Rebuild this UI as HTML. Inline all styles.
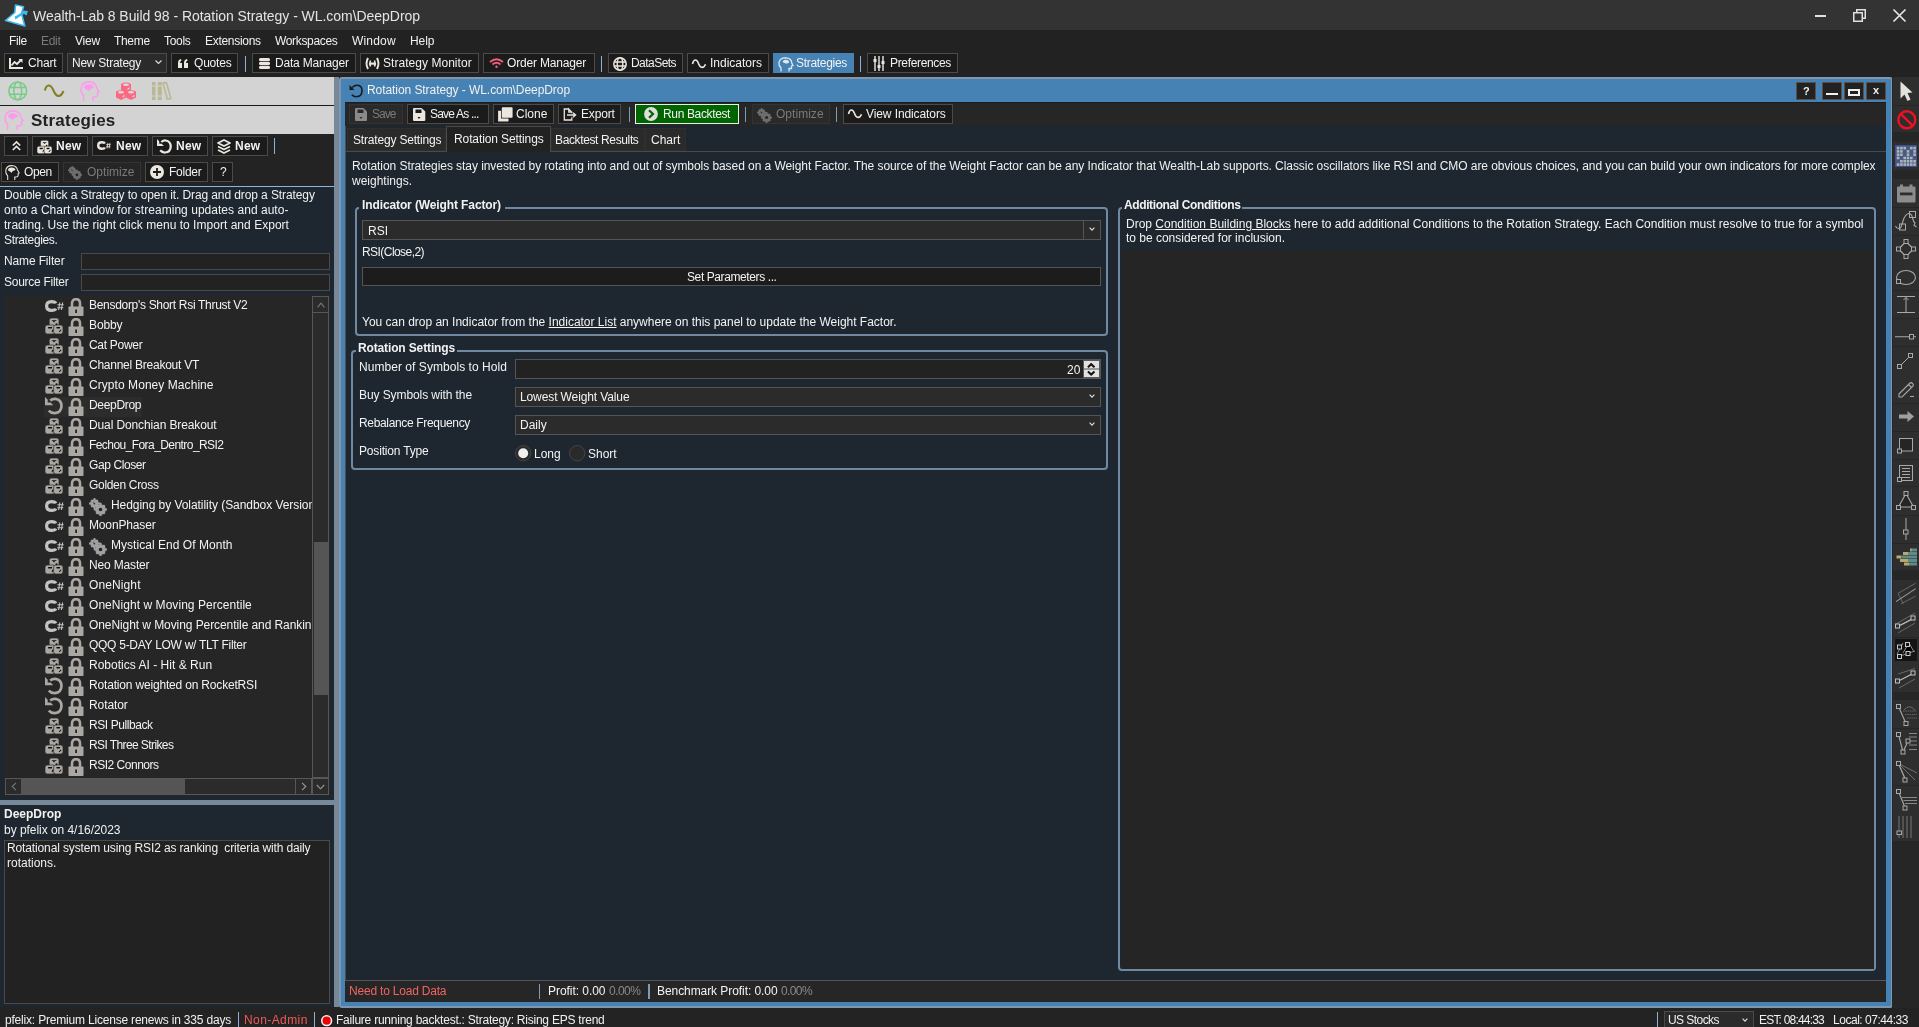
<!DOCTYPE html>
<html><head><meta charset="utf-8">
<style>
*{box-sizing:border-box;margin:0;padding:0}
html,body{width:1919px;height:1027px;overflow:hidden;background:#232323;font-family:"Liberation Sans",sans-serif;font-size:12px;color:#f2f2f2}
.a{position:absolute}
.t{position:absolute;white-space:nowrap;line-height:1;will-change:transform}
svg{position:absolute;overflow:visible}
</style></head><body>
<div class="a" style="left:0px;top:0px;width:1919px;height:30px;background:#333333;"></div>
<svg style="left:0px;top:0px;" width="32" height="30" viewBox="0 0 32 30"><path d="M15.5 5 L23.5 6.8 L21.5 13.5 L24.8 26 L5.5 20.5 L14.8 12.5 Z" fill="#fff" stroke="#3db8ec" stroke-width="1.6" stroke-linejoin="round"/>
    <path d="M14.5 16.5 L15.5 19.5 L22 15 L24 14 L26.5 15.5 L28 11 L23.5 10.5 L22.5 12 L16 16 Z" fill="#3db8ec"/>
    <path d="M17 6 L22 7 L20 12 L16 15 Z" fill="#fff"/></svg>
<div class="t" style="left:33px;top:9.35px;font-size:14px;color:#e4e4e4;letter-spacing:-0.044px;">Wealth-Lab 8 Build 98 - Rotation Strategy - WL.com\DeepDrop</div>
<div class="a" style="left:1815px;top:15px;width:11px;height:1.5px;background:#e0e0e0;"></div>
<svg style="left:1853px;top:8px;" width="14" height="14" viewBox="0 0 14 14"><path d="M0.75 4.75 H9.25 V13.25 H0.75 Z M3.75 4.5 V1.75 H12.25 V10.25 H9.5" fill="none" stroke="#e0e0e0" stroke-width="1.5"/></svg>
<svg style="left:1893px;top:9px;" width="13" height="13" viewBox="0 0 13 13"><path d="M0.5 0.5 L12.5 12.5 M12.5 0.5 L0.5 12.5" stroke="#e8e8e8" stroke-width="1.6"/></svg>
<div class="a" style="left:0px;top:30px;width:1919px;height:47px;background:#222222;"></div>
<div class="t" style="left:9.25px;top:34.64px;letter-spacing:-0.398px;">File</div>
<div class="t" style="left:41.25px;top:34.64px;color:#7a7a7a;letter-spacing:-0.297px;">Edit</div>
<div class="t" style="left:75px;top:34.64px;letter-spacing:-0.199px;">View</div>
<div class="t" style="left:114.25px;top:34.64px;letter-spacing:-0.322px;">Theme</div>
<div class="t" style="left:164.25px;top:34.64px;letter-spacing:-0.303px;">Tools</div>
<div class="t" style="left:205px;top:34.64px;letter-spacing:-0.295px;">Extensions</div>
<div class="t" style="left:275px;top:34.64px;letter-spacing:-0.331px;">Workspaces</div>
<div class="t" style="left:352px;top:34.64px;letter-spacing:0.177px;">Window</div>
<div class="t" style="left:410px;top:34.64px;letter-spacing:-0.047px;">Help</div>
<div class="a" style="left:4px;top:53px;width:59px;height:20px;background:#1b1b1b;border:1px solid #4b4b4b;"></div>
<svg style="left:9px;top:58px;" width="14" height="11" viewBox="0 0 14 11"><path d="M1 0 V10 H14" fill="none" stroke="#ebe6de" stroke-width="2"/><path d="M2.5 7.5 L5.5 4 L8 6 L12 2" fill="none" stroke="#ebe6de" stroke-width="1.8"/><path d="M9.5 1 H13.5 V5 Z" fill="#ebe6de"/></svg>
<div class="t" style="left:27.7px;top:56.84px;letter-spacing:-0.209px;">Chart</div>
<div class="a" style="left:67px;top:53px;width:100px;height:20px;background:#2b2b2b;border:1px solid #4b4b4b;"></div>
<div class="t" style="left:71.7px;top:56.84px;letter-spacing:-0.253px;">New Strategy</div>
<svg style="left:155px;top:60px;" width="7" height="4" viewBox="0 0 7 4"><path d="M0.5 0.5 L3.5 3.5 L6.5 0.5" fill="none" stroke="#d8d8d8" stroke-width="1.2"/></svg>
<div class="a" style="left:171px;top:53px;width:67px;height:20px;background:#1b1b1b;border:1px solid #4b4b4b;"></div>
<svg style="left:178px;top:59px;" width="10" height="9" viewBox="0 0 10 9"><path d="M0 4 Q0 0.5 3 0 L3.5 1.5 Q2 2 2 4 H4 V9 H0 Z M6 4 Q6 0.5 9 0 L9.5 1.5 Q8 2 8 4 H10 V9 H6 Z" fill="#ebe6de"/></svg>
<div class="t" style="left:193.5px;top:56.84px;letter-spacing:-0.201px;">Quotes</div>
<div class="a" style="left:245px;top:56px;width:1px;height:16px;background:#8fb0d8;"></div>
<div class="a" style="left:252px;top:53px;width:104px;height:20px;background:#1b1b1b;border:1px solid #4b4b4b;"></div>
<svg style="left:258.5px;top:58px;" width="11" height="11" viewBox="0 0 11 11"><rect x="0" y="0" width="11" height="3.2" rx="1.5" fill="#ebe6de"/><rect x="0" y="4" width="11" height="3" rx="1.2" fill="#ebe6de"/><rect x="0" y="7.8" width="11" height="3.2" rx="1.5" fill="#ebe6de"/></svg>
<div class="t" style="left:275px;top:56.84px;letter-spacing:-0.191px;">Data Manager</div>
<div class="a" style="left:360px;top:53px;width:119px;height:20px;background:#1b1b1b;border:1px solid #4b4b4b;"></div>
<svg style="left:365px;top:57px;" width="15" height="13" viewBox="0 0 15 13"><path d="M3 1 Q0 6.5 3 12 M12 1 Q15 6.5 12 12" fill="none" stroke="#ebe6de" stroke-width="2"/><path d="M5.5 3.5 Q4 6.5 5.5 9.5 M9.5 3.5 Q11 6.5 9.5 9.5" fill="none" stroke="#ebe6de" stroke-width="1.6"/><rect x="5" y="5.5" width="5" height="2.2" fill="#ebe6de"/></svg>
<div class="t" style="left:383.3px;top:56.84px;letter-spacing:0.041px;">Strategy Monitor</div>
<div class="a" style="left:483px;top:53px;width:112px;height:20px;background:#1b1b1b;border:1px solid #4b4b4b;"></div>
<svg style="left:489px;top:58px;" width="15" height="10" viewBox="0 0 15 10"><path d="M1 4 Q7.5 -1.5 14 4" fill="none" stroke="#ee5f7e" stroke-width="1.8"/><path d="M3.5 6.5 Q7.5 3 11.5 6.5" fill="none" stroke="#ee5f7e" stroke-width="1.8"/><rect x="6.5" y="7.5" width="2" height="2.5" fill="#ee5f7e"/></svg>
<div class="t" style="left:507.4px;top:56.84px;letter-spacing:-0.183px;">Order Manager</div>
<div class="a" style="left:601px;top:56px;width:1px;height:16px;background:#8fb0d8;"></div>
<div class="a" style="left:608px;top:53px;width:75px;height:20px;background:#1b1b1b;border:1px solid #4b4b4b;"></div>
<svg style="left:613px;top:56.5px;" width="14" height="14" viewBox="0 0 14 14"><circle cx="7" cy="7" r="6.2" fill="none" stroke="#ebe6de" stroke-width="1.5"/><ellipse cx="7" cy="7" rx="2.8" ry="6.2" fill="none" stroke="#ebe6de" stroke-width="1.4"/><path d="M1 5 H13 M1 9 H13" stroke="#ebe6de" stroke-width="1.3"/></svg>
<div class="t" style="left:631.2px;top:56.84px;letter-spacing:-0.545px;">DataSets</div>
<div class="a" style="left:687px;top:53px;width:82px;height:20px;background:#1b1b1b;border:1px solid #4b4b4b;"></div>
<svg style="left:692px;top:58.5px;" width="14" height="10" viewBox="0 0 14 10"><path d="M0.5 5 C1.8 -0.2 4.8 -0.2 6.5 4.5 C8 8.8 11.5 10.2 13.5 5.2" fill="none" stroke="#ebe6de" stroke-width="1.6"/></svg>
<div class="t" style="left:710px;top:56.84px;letter-spacing:-0.003px;">Indicators</div>
<div class="a" style="left:773px;top:53px;width:81px;height:20px;background:#4682b4;"></div>
<svg style="left:777.5px;top:56.5px;" width="15" height="15" viewBox="0 0 15 15"><path d="M3 14.5 V11 Q0.5 8.5 1 5.5 Q1.8 0.8 7.5 0.8 Q13.5 1 13.8 6 L15 8.5 L13.5 9 V11.5 L11 11.5 V14.5" fill="none" stroke="#dde8f2" stroke-width="1.3"/><path d="M4.5 5 Q5 2.5 8 2.7 Q11.5 3 11 5.8 Q9 7 7 6.2 Z" fill="#dde8f2"/></svg>
<div class="t" style="left:796px;top:56.84px;letter-spacing:-0.303px;">Strategies</div>
<div class="a" style="left:860px;top:56px;width:1px;height:16px;background:#8fb0d8;"></div>
<div class="a" style="left:867px;top:53px;width:91px;height:20px;background:#1b1b1b;border:1px solid #4b4b4b;"></div>
<svg style="left:873px;top:55.5px;" width="12" height="15" viewBox="0 0 12 15"><path d="M2 0 V15 M6 0 V15 M10 0 V15" stroke="#ebe6de" stroke-width="1.4"/><rect x="0.5" y="3" width="3" height="3" fill="#ebe6de"/><rect x="4.5" y="9" width="3" height="3" fill="#ebe6de"/><rect x="8.5" y="5" width="3" height="3" fill="#ebe6de"/></svg>
<div class="t" style="left:890px;top:56.84px;letter-spacing:-0.337px;">Preferences</div>
<svg width="0" height="0" style="position:absolute">
<defs>
<symbol id="csharp" viewBox="0 0 19 12"><path d="M10.8 3.4 Q10 1.6 6.5 1.6 Q1.6 1.6 1.6 6 Q1.6 10.4 6.5 10.4 Q10 10.4 10.8 8.6" fill="none" stroke="currentColor" stroke-width="3.2"/><path d="M14.8 2.5 L13.6 10 M17.6 2.5 L16.4 10 M12.4 4.8 H18.6 M12.2 7.7 H18.3" stroke="currentColor" stroke-width="1.1" fill="none"/></symbol>
<symbol id="cubes" viewBox="0 0 18 16"><g stroke="#252525" stroke-width="0.7"><rect x="4.2" y="0" width="9.8" height="9" rx="2.2" fill="currentColor"/><rect x="0" y="7" width="10.2" height="9" rx="2.2" fill="currentColor"/><rect x="8.6" y="7" width="9.4" height="9" rx="2.2" fill="currentColor"/></g><g fill="#111"><path d="M6.3 2.2 H12 L9.8 3.6 L9 4.5 L8.2 3.6 Z"/><circle cx="11.5" cy="6.2" r="1"/><path d="M3 9 H7.2 L6.8 10.6 H3.3 Z"/><path d="M11.3 9 H15.2 L14.8 10.6 H11.7 Z"/><path d="M7.3 11.5 L8.3 12 L7.4 14.5 L6.6 14 Z"/><path d="M15.8 11.4 L16.5 12.2 L14.5 14.3 L13.8 13.6 Z"/></g></symbol>
<symbol id="lock" viewBox="0 0 16 18"><path d="M4 9 V5.5 Q4 1.2 8 1.2 Q12 1.2 12 5.5 V9" fill="none" stroke="currentColor" stroke-width="2.6"/><rect x="0.5" y="8.5" width="15" height="9.5" rx="0.8" fill="currentColor"/><rect x="7.2" y="11.5" width="1.8" height="3.5" fill="#252525"/></symbol>
<symbol id="rotate" viewBox="0 0 18 18"><path d="M5.2 3.6 Q7.5 1.6 10.5 1.8 Q16.3 2.6 16.5 9 Q16.3 15.6 9.8 16.2 Q6.2 16.3 3.8 13.6" fill="none" stroke="currentColor" stroke-width="2.7"/><path d="M0 0 V8.3 H8.3 L5.6 5.6 L2.7 5.6 L2.7 2.7 Z" fill="currentColor"/></symbol>
<symbol id="gears" viewBox="0 0 18 18"><g fill="currentColor"><circle cx="5.5" cy="5.5" r="4.2"/><path d="M4.6 0 H6.4 V11 H4.6 Z M0 4.6 H11 V6.4 H0 Z M1.5 2.8 L2.8 1.5 L9.5 8.2 L8.2 9.5 Z M8.2 1.5 L9.5 2.8 L2.8 9.5 L1.5 8.2 Z"/><circle cx="11.5" cy="11.5" r="5.3"/><path d="M10.4 4.8 H12.6 V18.2 H10.4 Z M4.8 10.4 H18.2 V12.6 H4.8 Z M6.5 8.1 L8.1 6.5 L16.5 14.9 L14.9 16.5 Z M14.9 6.5 L16.5 8.1 L8.1 16.5 L6.5 14.9 Z"/></g><circle cx="11.5" cy="11.5" r="1.8" fill="#252525"/><path d="M4 3.5 L6.5 6 L5 6.5 Z" fill="#252525"/></symbol>
<symbol id="head" viewBox="0 0 20 20"><path d="M3.6 20 V14.5 Q0.8 12 1 8 Q1.5 0.8 9 0.8 Q15.5 1 16.8 7 L19 10.8 L17.5 11.5 V14.5 Q17 16 14.5 16 H13 V20" fill="none" stroke="currentColor" stroke-width="1.4"/><path d="M4 6.5 Q4.5 3 9 3.2 Q13.5 3.5 14 6.8 Q12.5 7.8 10.5 8 L8.3 10.5 L7 8.5 Q4.5 8 4 6.5 Z" fill="currentColor"/></symbol>
</defs></svg>
<div class="a" style="left:0px;top:77px;width:334px;height:28px;background:#d3d3d3;"></div>
<svg style="left:8px;top:81px;" width="20" height="20" viewBox="0 0 20 20"><circle cx="9.75" cy="9.9" r="8.9" fill="none" stroke="#77cc88" stroke-width="1.6"/><ellipse cx="9.75" cy="9.9" rx="3.9" ry="8.9" fill="none" stroke="#77cc88" stroke-width="1.5"/><path d="M1.3 6.6 H18.2 M1.3 13.2 H18.2" stroke="#77cc88" stroke-width="1.5"/></svg>
<svg style="left:44px;top:84px;" width="20" height="14" viewBox="0 0 20 14"><path d="M0.8 6.5 C2.5 0 6.5 -0.5 9.5 6.5 C12.5 13.5 16.5 14 19.5 7" fill="none" stroke="#808020" stroke-width="2"/></svg>
<svg style="left:80px;top:81px;color:#ff99ee" width="20" height="20"><use href="#head"/></svg>
<svg style="left:116px;top:82px;" width="20" height="18" viewBox="0 0 20 18"><g fill="#ff6680"><path d="M5 2 Q10 -0.8 15 2 V8 L10 10.5 L5 8 Z"/><path d="M0 9.5 Q5 6.8 10 9.5 V15.5 L5 18 L0 15.5 Z"/><path d="M10 9.5 Q15 6.8 20 9.5 V15.5 L15 18 L10 15.5 Z"/></g><g fill="#cfe0e0"><ellipse cx="10" cy="2.8" rx="3" ry="1.2"/><ellipse cx="5" cy="10.2" rx="3" ry="1.2"/><ellipse cx="15" cy="10.2" rx="3" ry="1.2"/><path d="M11.5 6.5 L13.5 5.2 L13.5 7 L11.5 8 Z M6.5 14 L8.5 12.8 L8.5 14.6 L6.5 15.6 Z M16.5 14 L18.5 12.8 L18.5 14.6 L16.5 15.6 Z"/></g></svg>
<svg style="left:152px;top:82px;" width="20" height="18" viewBox="0 0 20 18"><g fill="#b8b896"><rect x="0" y="0" width="3.5" height="18"/><rect x="5.8" y="0" width="4" height="18"/></g><path d="M11 1 L14.5 0.6 L18.8 16.5 L15.3 17.2 Z" fill="none" stroke="#b8b896" stroke-width="1.6"/><path d="M0 4 H10 M0 14 H10" stroke="#d3d3d3" stroke-width="1"/></svg>
<div class="a" style="left:0px;top:104.5px;width:334px;height:1.7px;background:#1a1a1a;"></div>
<div class="a" style="left:0px;top:106.2px;width:334px;height:27.8px;background:#d3d3d3;"></div>
<svg style="left:4px;top:110px;color:#ff99ee" width="20" height="20"><use href="#head"/></svg>
<div class="t" style="left:30.8px;top:112.21px;font-size:17px;color:#222;font-weight:700;letter-spacing:0.230px;">Strategies</div>
<div class="a" style="left:0px;top:134px;width:334px;height:52px;background:#232323;"></div>
<div class="a" style="left:4px;top:136px;width:24px;height:20px;background:#1b1b1b;border:1px solid #4b4b4b;"></div>
<svg style="left:11.5px;top:141px;" width="9" height="10" viewBox="0 0 9 10"><path d="M0.8 4.5 L4.5 0.9 L8.2 4.5 M0.8 9 L4.5 5.4 L8.2 9" fill="none" stroke="#ebe6de" stroke-width="1.7"/></svg>
<div class="a" style="left:32px;top:136px;width:56px;height:20px;background:#1b1b1b;border:1px solid #4b4b4b;"></div>
<svg style="left:36.5px;top:139.5px;color:#ebe6de" width="15" height="14"><use href="#cubes"/></svg>
<div class="t" style="left:55.5px;top:139.84px;color:#f2f2f2;font-weight:700;letter-spacing:0.237px;">New</div>
<div class="a" style="left:92px;top:136px;width:56px;height:20px;background:#1b1b1b;border:1px solid #4b4b4b;"></div>
<svg style="left:97px;top:140px;color:#ebe6de" width="14" height="11"><use href="#csharp"/></svg>
<div class="t" style="left:115.6px;top:139.84px;color:#f2f2f2;font-weight:700;letter-spacing:0.237px;">New</div>
<div class="a" style="left:152px;top:136px;width:56px;height:20px;background:#1b1b1b;border:1px solid #4b4b4b;"></div>
<svg style="left:156.5px;top:139px;color:#ebe6de" width="15" height="15"><use href="#rotate"/></svg>
<div class="t" style="left:175.6px;top:139.84px;color:#f2f2f2;font-weight:700;letter-spacing:0.237px;">New</div>
<div class="a" style="left:212px;top:136px;width:56px;height:20px;background:#1b1b1b;border:1px solid #4b4b4b;"></div>
<svg style="left:217px;top:139px;" width="14" height="15" viewBox="0 0 14 15"><path d="M7 1 L13 4 L7 7 L1 4 Z" fill="none" stroke="#ebe6de" stroke-width="1.8" stroke-linejoin="round"/><path d="M1 7.5 L7 10.5 L13 7.5 M1 11 L7 14 L13 11" fill="none" stroke="#ebe6de" stroke-width="1.8" stroke-linejoin="round"/></svg>
<div class="t" style="left:235.4px;top:139.84px;color:#f2f2f2;font-weight:700;letter-spacing:0.237px;">New</div>
<div class="a" style="left:274px;top:138px;width:1px;height:16px;background:#8fb0d8;"></div>
<div class="a" style="left:1px;top:162px;width:58px;height:20px;background:#1b1b1b;border:1px solid #4b4b4b;"></div>
<svg style="left:4.7px;top:165px;color:#ebe6de" width="15" height="15"><use href="#head"/></svg>
<div class="t" style="left:23.5px;top:165.84px;letter-spacing:-0.415px;">Open</div>
<div class="a" style="left:63px;top:162px;width:78px;height:20px;background:#262626;border:1px solid #333333;"></div>
<svg style="left:68px;top:165.5px;color:#6e6e6e" width="14" height="14"><use href="#gears"/></svg>
<div class="t" style="left:86.6px;top:165.84px;color:#7a7a7a;letter-spacing:0.020px;">Optimize</div>
<div class="a" style="left:145px;top:162px;width:63px;height:20px;background:#1b1b1b;border:1px solid #4b4b4b;"></div>
<svg style="left:149.8px;top:165.2px;" width="14" height="14" viewBox="0 0 14 14"><circle cx="7" cy="7" r="7" fill="#ebe6de"/><path d="M7 3 V11 M3 7 H11" stroke="#1b1b1b" stroke-width="1.8"/></svg>
<div class="t" style="left:168.5px;top:165.84px;letter-spacing:-0.253px;">Folder</div>
<div class="a" style="left:212px;top:162px;width:21px;height:20px;background:#1b1b1b;border:1px solid #4b4b4b;"></div>
<div class="t" style="left:219.5px;top:165.84px;color:#f0f0f0;">?</div>
<div class="a" style="left:0px;top:185.5px;width:334px;height:1.5px;background:#8fb4d8;"></div>
<div class="a" style="left:0px;top:187px;width:334px;height:613px;background:#1e2730;"></div>
<div class="t" style="left:4.2px;top:188.94px;color:#f0f0f0;letter-spacing:-0.101px;">Double click a Strategy to open it. Drag and drop a Strategy</div>
<div class="t" style="left:4.2px;top:203.94px;color:#f0f0f0;letter-spacing:0.032px;">onto a Chart window for streaming updates and auto-</div>
<div class="t" style="left:4.2px;top:218.94px;color:#f0f0f0;letter-spacing:0.028px;">trading. Use the right click menu to Import and Export</div>
<div class="t" style="left:4.2px;top:233.94px;color:#f0f0f0;letter-spacing:-0.352px;">Strategies.</div>
<div class="t" style="left:4.2px;top:254.94px;color:#f0f0f0;letter-spacing:-0.138px;">Name Filter</div>
<div class="a" style="left:81px;top:253px;width:249px;height:17px;background:#222;border:1px solid #4a4a4a;"></div>
<div class="t" style="left:4.2px;top:275.84px;color:#f0f0f0;letter-spacing:-0.272px;">Source Filter</div>
<div class="a" style="left:81px;top:274px;width:249px;height:17px;background:#222;border:1px solid #4a4a4a;"></div>
<div class="a" style="left:4px;top:295px;width:326px;height:501px;background:#262626;"></div>
<div class="a" style="left:5px;top:296px;width:307px;height:482px;overflow:hidden">
<svg style="left:40px;top:4px;color:#c2c2c2" width="19" height="12"><use href="#csharp"/></svg>
<svg style="left:63px;top:2px;color:#aba7a2" width="16" height="18"><use href="#lock"/></svg>
<div class="t" style="left:84.0px;top:2.84px;color:#f3f3f3;letter-spacing:-0.303px;">Bensdorp's Short Rsi Thrust V2</div>
<svg style="left:40px;top:22px;color:#aba7a2" width="18" height="16"><use href="#cubes"/></svg>
<svg style="left:63px;top:22px;color:#aba7a2" width="16" height="18"><use href="#lock"/></svg>
<div class="t" style="left:84.0px;top:22.84px;color:#f3f3f3;letter-spacing:-0.126px;">Bobby</div>
<svg style="left:40px;top:42px;color:#aba7a2" width="18" height="16"><use href="#cubes"/></svg>
<svg style="left:63px;top:42px;color:#aba7a2" width="16" height="18"><use href="#lock"/></svg>
<div class="t" style="left:84.0px;top:42.84px;color:#f3f3f3;letter-spacing:-0.292px;">Cat Power</div>
<svg style="left:40px;top:62px;color:#aba7a2" width="18" height="16"><use href="#cubes"/></svg>
<svg style="left:63px;top:62px;color:#aba7a2" width="16" height="18"><use href="#lock"/></svg>
<div class="t" style="left:84.0px;top:62.84px;color:#f3f3f3;letter-spacing:-0.249px;">Channel Breakout VT</div>
<svg style="left:40px;top:82px;color:#aba7a2" width="18" height="16"><use href="#cubes"/></svg>
<svg style="left:63px;top:82px;color:#aba7a2" width="16" height="18"><use href="#lock"/></svg>
<div class="t" style="left:84.0px;top:82.84px;color:#f3f3f3;letter-spacing:0.060px;">Crypto Money Machine</div>
<div class="a" style="left:39.3px;top:101.2px;width:98px;height:19.4px;background:#2c2c2c;"></div>
<svg style="left:40px;top:101px;color:#aba7a2" width="18" height="18"><use href="#rotate"/></svg>
<svg style="left:63px;top:102px;color:#aba7a2" width="16" height="18"><use href="#lock"/></svg>
<div class="t" style="left:84.0px;top:102.84px;color:#f3f3f3;letter-spacing:-0.325px;">DeepDrop</div>
<svg style="left:40px;top:122px;color:#aba7a2" width="18" height="16"><use href="#cubes"/></svg>
<svg style="left:63px;top:122px;color:#aba7a2" width="16" height="18"><use href="#lock"/></svg>
<div class="t" style="left:84.0px;top:122.84px;color:#f3f3f3;letter-spacing:-0.117px;">Dual Donchian Breakout</div>
<svg style="left:40px;top:142px;color:#aba7a2" width="18" height="16"><use href="#cubes"/></svg>
<svg style="left:63px;top:142px;color:#aba7a2" width="16" height="18"><use href="#lock"/></svg>
<div class="t" style="left:84.0px;top:142.84px;color:#f3f3f3;letter-spacing:-0.566px;">Fechou_Fora_Dentro_RSI2</div>
<svg style="left:40px;top:162px;color:#aba7a2" width="18" height="16"><use href="#cubes"/></svg>
<svg style="left:63px;top:162px;color:#aba7a2" width="16" height="18"><use href="#lock"/></svg>
<div class="t" style="left:84.0px;top:162.84px;color:#f3f3f3;letter-spacing:-0.410px;">Gap Closer</div>
<svg style="left:40px;top:182px;color:#aba7a2" width="18" height="16"><use href="#cubes"/></svg>
<svg style="left:63px;top:182px;color:#aba7a2" width="16" height="18"><use href="#lock"/></svg>
<div class="t" style="left:84.0px;top:182.84px;color:#f3f3f3;letter-spacing:-0.315px;">Golden Cross</div>
<svg style="left:40px;top:204px;color:#c2c2c2" width="19" height="12"><use href="#csharp"/></svg>
<svg style="left:63px;top:202px;color:#aba7a2" width="16" height="18"><use href="#lock"/></svg>
<svg style="left:84.1px;top:202px;color:#a0a0a0" width="18" height="18"><use href="#gears"/></svg>
<div class="t" style="left:105.8px;top:202.84px;color:#f3f3f3;letter-spacing:-0.054px;">Hedging by Volatility (Sandbox Version)</div>
<svg style="left:40px;top:224px;color:#c2c2c2" width="19" height="12"><use href="#csharp"/></svg>
<svg style="left:63px;top:222px;color:#aba7a2" width="16" height="18"><use href="#lock"/></svg>
<div class="t" style="left:84.0px;top:222.84px;color:#f3f3f3;letter-spacing:-0.155px;">MoonPhaser</div>
<svg style="left:40px;top:244px;color:#c2c2c2" width="19" height="12"><use href="#csharp"/></svg>
<svg style="left:63px;top:242px;color:#aba7a2" width="16" height="18"><use href="#lock"/></svg>
<svg style="left:84.1px;top:242px;color:#a0a0a0" width="18" height="18"><use href="#gears"/></svg>
<div class="t" style="left:105.8px;top:242.84px;color:#f3f3f3;letter-spacing:0.037px;">Mystical End Of Month</div>
<svg style="left:40px;top:262px;color:#aba7a2" width="18" height="16"><use href="#cubes"/></svg>
<svg style="left:63px;top:262px;color:#aba7a2" width="16" height="18"><use href="#lock"/></svg>
<div class="t" style="left:84.0px;top:262.84px;color:#f3f3f3;letter-spacing:-0.163px;">Neo Master</div>
<svg style="left:40px;top:284px;color:#c2c2c2" width="19" height="12"><use href="#csharp"/></svg>
<svg style="left:63px;top:282px;color:#aba7a2" width="16" height="18"><use href="#lock"/></svg>
<div class="t" style="left:84.0px;top:282.84px;color:#f3f3f3;letter-spacing:0.112px;">OneNight</div>
<svg style="left:40px;top:304px;color:#c2c2c2" width="19" height="12"><use href="#csharp"/></svg>
<svg style="left:63px;top:302px;color:#aba7a2" width="16" height="18"><use href="#lock"/></svg>
<div class="t" style="left:84.0px;top:302.84px;color:#f3f3f3;letter-spacing:0.051px;">OneNight w Moving Percentile</div>
<svg style="left:40px;top:324px;color:#c2c2c2" width="19" height="12"><use href="#csharp"/></svg>
<svg style="left:63px;top:322px;color:#aba7a2" width="16" height="18"><use href="#lock"/></svg>
<div class="t" style="left:84.0px;top:322.84px;color:#f3f3f3;letter-spacing:-0.078px;">OneNight w Moving Percentile and Ranking</div>
<svg style="left:40px;top:342px;color:#aba7a2" width="18" height="16"><use href="#cubes"/></svg>
<svg style="left:63px;top:342px;color:#aba7a2" width="16" height="18"><use href="#lock"/></svg>
<div class="t" style="left:84.0px;top:342.84px;color:#f3f3f3;letter-spacing:-0.275px;">QQQ 5-DAY LOW w/ TLT Filter</div>
<svg style="left:40px;top:362px;color:#aba7a2" width="18" height="16"><use href="#cubes"/></svg>
<svg style="left:63px;top:362px;color:#aba7a2" width="16" height="18"><use href="#lock"/></svg>
<div class="t" style="left:84.0px;top:362.84px;color:#f3f3f3;letter-spacing:0.017px;">Robotics AI - Hit &amp; Run</div>
<svg style="left:40px;top:381px;color:#aba7a2" width="18" height="18"><use href="#rotate"/></svg>
<svg style="left:63px;top:382px;color:#aba7a2" width="16" height="18"><use href="#lock"/></svg>
<div class="t" style="left:84.0px;top:382.84px;color:#f3f3f3;letter-spacing:-0.178px;">Rotation weighted on RocketRSI</div>
<svg style="left:40px;top:401px;color:#aba7a2" width="18" height="18"><use href="#rotate"/></svg>
<svg style="left:63px;top:402px;color:#aba7a2" width="16" height="18"><use href="#lock"/></svg>
<div class="t" style="left:84.0px;top:402.84px;color:#f3f3f3;letter-spacing:-0.094px;">Rotator</div>
<svg style="left:40px;top:422px;color:#aba7a2" width="18" height="16"><use href="#cubes"/></svg>
<svg style="left:63px;top:422px;color:#aba7a2" width="16" height="18"><use href="#lock"/></svg>
<div class="t" style="left:84.0px;top:422.84px;color:#f3f3f3;letter-spacing:-0.417px;">RSI Pullback</div>
<svg style="left:40px;top:442px;color:#aba7a2" width="18" height="16"><use href="#cubes"/></svg>
<svg style="left:63px;top:442px;color:#aba7a2" width="16" height="18"><use href="#lock"/></svg>
<div class="t" style="left:84.0px;top:442.84px;color:#f3f3f3;letter-spacing:-0.596px;">RSI Three Strikes</div>
<svg style="left:40px;top:462px;color:#aba7a2" width="18" height="16"><use href="#cubes"/></svg>
<svg style="left:63px;top:462px;color:#aba7a2" width="16" height="18"><use href="#lock"/></svg>
<div class="t" style="left:84.0px;top:462.84px;color:#f3f3f3;letter-spacing:-0.481px;">RSI2 Connors</div>
</div>
<div class="a" style="left:312px;top:296px;width:17px;height:482px;background:#2b2b2b;border:1px solid #575757;"></div>
<div class="a" style="left:312px;top:296px;width:17px;height:17px;background:#2b2b2b;border:1px solid #575757;"></div>
<svg style="left:316.5px;top:302px;" width="8" height="6" viewBox="0 0 8 6"><path d="M0.6 5.4 L4 1.2 L7.4 5.4" fill="none" stroke="#777" stroke-width="1.1"/></svg>
<div class="a" style="left:313.5px;top:541.5px;width:14px;height:153.5px;background:#555555;"></div>
<div class="a" style="left:5px;top:778px;width:324px;height:17px;background:#2b2b2b;border:1px solid #575757;"></div>
<div class="a" style="left:5px;top:778px;width:17px;height:17px;background:#2b2b2b;border:1px solid #575757;"></div>
<svg style="left:11px;top:782px;" width="6" height="9" viewBox="0 0 6 9"><path d="M5 0.8 L1.2 4.5 L5 8.2" fill="none" stroke="#777" stroke-width="1.1"/></svg>
<div class="a" style="left:22px;top:779px;width:163px;height:15px;background:#555555;"></div>
<div class="a" style="left:295px;top:778px;width:17px;height:17px;background:#2b2b2b;border:1px solid #575757;"></div>
<svg style="left:300.5px;top:782px;" width="6" height="9" viewBox="0 0 6 9"><path d="M1 0.8 L4.8 4.5 L1 8.2" fill="none" stroke="#999" stroke-width="1.1"/></svg>
<div class="a" style="left:312px;top:778px;width:17px;height:17px;background:#2b2b2b;border:1px solid #575757;"></div>
<svg style="left:316px;top:784px;" width="9" height="6" viewBox="0 0 9 6"><path d="M0.8 1 L4.5 4.8 L8.2 1" fill="none" stroke="#999" stroke-width="1.1"/></svg>
<div class="a" style="left:0px;top:800px;width:334px;height:5px;background:#778899;"></div>
<div class="a" style="left:0px;top:805px;width:334px;height:202px;background:#1e2730;"></div>
<div class="t" style="left:4.4px;top:808.14px;color:#f3f3f3;font-weight:700;">DeepDrop</div>
<div class="t" style="left:4.4px;top:823.84px;color:#f0f0f0;letter-spacing:-0.042px;">by pfelix on 4/16/2023</div>
<div class="a" style="left:4px;top:839.5px;width:326px;height:164px;background:#222;border:1px solid #4a4a4a;"></div>
<div class="t" style="left:7.3px;top:842.04px;color:#f0f0f0;letter-spacing:-0.133px;">Rotational system using RSI2 as ranking&nbsp; criteria with daily</div>
<div class="t" style="left:7.3px;top:856.64px;color:#f0f0f0;">rotations.</div>
<div class="a" style="left:334px;top:77px;width:5px;height:930px;background:#778899;"></div>
<div class="a" style="left:338.5px;top:77px;width:1554px;height:931px;background:#4682b4;border:2px solid #7f97ae;border-radius:3px;"></div>
<svg style="left:348.5px;top:84px;" width="14" height="14" viewBox="0 0 14 14"><path d="M3.2 3.5 Q5.5 1.2 8.5 1.3 Q13 1.6 13 7 Q12.8 12.5 7.5 12.8 Q4.5 12.8 2.8 10.8" fill="none" stroke="#1a1a1a" stroke-width="1.6"/><path d="M0.5 1 V6 H5.5 Z" fill="#1a1a1a"/></svg>
<div class="t" style="left:367.4px;top:84.04px;color:#f0f0f0;letter-spacing:-0.069px;">Rotation Strategy - WL.com\DeepDrop</div>
<div class="a" style="left:1796px;top:82.4px;width:19.5px;height:17.2px;background:#222;border:1px solid #5a4e46;"></div>
<div class="a" style="left:1822.3px;top:82.4px;width:19.5px;height:17.2px;background:#222;border:1px solid #5a4e46;"></div>
<div class="a" style="left:1844.3px;top:82.4px;width:19.5px;height:17.2px;background:#222;border:1px solid #5a4e46;"></div>
<div class="a" style="left:1866.3px;top:82.4px;width:19.5px;height:17.2px;background:#222;border:1px solid #5a4e46;"></div>
<div class="t" style="left:1802.5px;top:85.69px;font-size:11px;color:#f0f0f0;font-weight:700;">?</div>
<div class="a" style="left:1826px;top:92.8px;width:12px;height:2.4px;background:#f0f0f0;"></div>
<div class="a" style="left:1848px;top:88.8px;width:12.2px;height:7.4px;border:2px solid #f0f0f0;"></div>
<div class="t" style="left:1873px;top:85.49px;font-size:11px;color:#f0f0f0;font-weight:700;">x</div>
<div class="a" style="left:345px;top:102px;width:1541px;height:24px;background:#262626;"></div>
<div class="a" style="left:345px;top:102px;width:1541px;height:1.2px;background:#1c1c1c;"></div>
<div class="a" style="left:349.2px;top:104.2px;width:53.6px;height:19.6px;background:#2a2a2a;border:1px solid #333;"></div>
<svg style="left:355px;top:108px;" width="12" height="13" viewBox="0 0 12 13"><path d="M0 1 Q0 0 1 0 H8.5 L12 3.5 V12 Q12 13 11 13 H1 Q0 13 0 12 Z" fill="#8a8a8a"/><rect x="2.5" y="1.5" width="6" height="3.5" fill="#2a2a2a"/><path d="M4.5 9 H7.5 L6 11 Z" fill="#2a2a2a"/></svg>
<div class="t" style="left:372.4px;top:107.74px;color:#7a7a7a;letter-spacing:-0.940px;">Save</div>
<div class="a" style="left:407.3px;top:104.2px;width:81.5px;height:19.6px;background:#1b1b1b;border:1px solid #4b4b4b;"></div>
<svg style="left:412.6px;top:108px;" width="12.3" height="13" viewBox="0 0 12.3 13"><path d="M0 1 Q0 0 1 0 H8.5 L12.3 3.5 V12 Q12.3 13 11 13 H1 Q0 13 0 12 Z" fill="#ebe6de"/><rect x="2.5" y="1.5" width="6" height="3.5" fill="#1b1b1b"/><path d="M4.5 9 H7.5 L6 11 Z" fill="#1b1b1b"/></svg>
<div class="t" style="left:430.2px;top:107.74px;letter-spacing:-0.807px;">Save As ...</div>
<div class="a" style="left:493.2px;top:104.2px;width:60.5px;height:19.6px;background:#1b1b1b;border:1px solid #4b4b4b;"></div>
<svg style="left:497.5px;top:107.2px;" width="15" height="15" viewBox="0 0 15 15"><rect x="3.8" y="0.2" width="10.8" height="10.6" rx="0.8" fill="#ebe6de"/><path d="M1.6 3.8 V13 H10.5" fill="none" stroke="#ebe6de" stroke-width="3"/></svg>
<div class="t" style="left:516.1px;top:107.74px;letter-spacing:-0.012px;">Clone</div>
<div class="a" style="left:558.2px;top:104.2px;width:63.3px;height:19.6px;background:#1b1b1b;border:1px solid #4b4b4b;"></div>
<svg style="left:563px;top:108px;" width="14" height="13" viewBox="0 0 14 13"><path d="M5.8 1 H1.3 V12 H8.8 V9.3 M8.8 5.2 V4.3 L5.8 1.2 V4.2 H8.6" fill="none" stroke="#ebe6de" stroke-width="1.3"/><path d="M4 7 H12 M10 4.8 L12.6 7 L10 9.2" fill="none" stroke="#ebe6de" stroke-width="1.3"/></svg>
<div class="t" style="left:581.2px;top:107.74px;letter-spacing:-0.148px;">Export</div>
<div class="a" style="left:628.5px;top:106.5px;width:1.3px;height:15.5px;background:#7d9cbc;"></div>
<div class="a" style="left:635px;top:104px;width:104px;height:20px;background:#006400;border:1px solid #e6f0e6;"></div>
<svg style="left:643.8px;top:107.1px;" width="14" height="14" viewBox="0 0 14 14"><circle cx="7" cy="7" r="6.9" fill="#e2dede"/><path d="M5 3.2 L9 7 L5 10.8" fill="none" stroke="#006400" stroke-width="2.2"/></svg>
<div class="t" style="left:662.6px;top:107.74px;color:#f2f2f2;letter-spacing:-0.356px;">Run Backtest</div>
<div class="a" style="left:745px;top:106.5px;width:1.3px;height:15.5px;background:#7d9cbc;"></div>
<div class="a" style="left:752px;top:104.2px;width:78px;height:19.6px;background:#2a2a2a;border:1px solid #333;"></div>
<svg style="left:756.6px;top:108px;color:#6e6e6e" width="15" height="15"><use href="#gears"/></svg>
<div class="t" style="left:775.5px;top:107.74px;color:#7a7a7a;letter-spacing:0.032px;">Optimize</div>
<div class="a" style="left:836px;top:106.5px;width:1.3px;height:15.5px;background:#7d9cbc;"></div>
<div class="a" style="left:843.2px;top:104.2px;width:109.5px;height:19.6px;background:#1b1b1b;border:1px solid #4b4b4b;"></div>
<svg style="left:847.8px;top:109px;" width="14" height="10" viewBox="0 0 14 10"><path d="M0.5 5 C1.8 -0.2 4.8 -0.2 6.5 4.5 C8 8.8 11.5 10.2 13.5 5.2" fill="none" stroke="#ebe6de" stroke-width="1.6"/></svg>
<div class="t" style="left:866.1px;top:107.74px;letter-spacing:-0.097px;">View Indicators</div>
<div class="a" style="left:345px;top:126px;width:1541px;height:854px;background:#1e2730;"></div>
<div class="a" style="left:345px;top:126px;width:1px;height:854px;background:#4e4e4e;"></div>
<div class="a" style="left:346px;top:151px;width:1540px;height:1px;background:#4a4a4a;"></div>
<div class="a" style="left:346.7px;top:127.9px;width:99px;height:23.2px;background:#2a2a2a;border:1px solid #2f2f2f;"></div>
<div class="a" style="left:550.5px;top:127.9px;width:94px;height:23.2px;background:#2a2a2a;border:1px solid #2f2f2f;"></div>
<div class="a" style="left:644.5px;top:127.9px;width:41px;height:23.2px;background:#2a2a2a;border:1px solid #2f2f2f;"></div>
<div class="a" style="left:445.5px;top:126.4px;width:105px;height:25.6px;background:#222222;border:1px solid #4a4a4a;border-bottom:none"></div>
<div class="t" style="left:353px;top:133.84px;color:#f3f3f3;letter-spacing:-0.182px;">Strategy Settings</div>
<div class="t" style="left:453.6px;top:133.04px;color:#f3f3f3;letter-spacing:-0.105px;">Rotation Settings</div>
<div class="t" style="left:555.1px;top:133.84px;color:#f3f3f3;letter-spacing:-0.367px;">Backtest Results</div>
<div class="t" style="left:651px;top:133.84px;color:#f3f3f3;">Chart</div>
<div class="t" style="left:352.4px;top:159.64px;color:#f0f0f0;letter-spacing:-0.064px;">Rotation Strategies stay invested by rotating into and out of symbols based on a Weight Factor. The source of the Weight Factor can be any Indicator that Wealth-Lab supports. Classic oscillators like RSI and CMO are obvious choices, and you can build your own indicators for more complex</div>
<div class="t" style="left:352.4px;top:174.64px;color:#f0f0f0;letter-spacing:-0.004px;">weightings.</div>
<div class="a" style="left:355.2px;top:207.2px;width:752.8px;height:128.7px;border:2px solid #7189a0;border-radius:4px;"></div>
<div class="a" style="left:359px;top:203px;width:146px;height:8px;background:#1e2730;"></div>
<div class="t" style="left:361.9px;top:198.84px;color:#f2f2f2;font-weight:700;letter-spacing:-0.111px;">Indicator (Weight Factor)</div>
<div class="a" style="left:362px;top:220.1px;width:739px;height:20px;background:#2b2b2b;border:1px solid #555;"></div>
<div class="a" style="left:1082.5px;top:220.1px;width:1px;height:20px;background:#555;"></div>
<svg style="left:1089px;top:227.29999999999998px;" width="6" height="4" viewBox="0 0 6 4"><path d="M0.6 0.6 L3 3.2 L5.4 0.6" fill="none" stroke="#e0e0e0" stroke-width="1.1"/></svg>
<div class="t" style="left:367.8px;top:224.84px;color:#f3f3f3;">RSI</div>
<div class="t" style="left:362px;top:246.24px;color:#f3f3f3;letter-spacing:-0.557px;">RSI(Close,2)</div>
<div class="a" style="left:362px;top:266.8px;width:739px;height:19.5px;background:#1c1c1c;border:1px solid #555;"></div>
<div class="t" style="left:687px;top:271.34px;color:#f3f3f3;letter-spacing:-0.400px;">Set Parameters ...</div>
<div class="t" style="left:362.4px;top:315.64px;color:#f3f3f3;letter-spacing:-0.012px;">You can drop an Indicator from the <u>Indicator List</u> anywhere on this panel to update the Weight Factor.</div>
<div class="a" style="left:351.1px;top:350.2px;width:756.9px;height:120px;border:2px solid #7189a0;border-radius:4px;"></div>
<div class="a" style="left:356px;top:346px;width:101px;height:8px;background:#1e2730;"></div>
<div class="t" style="left:358px;top:342.24px;color:#f2f2f2;font-weight:700;letter-spacing:-0.137px;">Rotation Settings</div>
<div class="t" style="left:359px;top:361.24px;color:#f3f3f3;letter-spacing:0.051px;">Number of Symbols to Hold</div>
<div class="a" style="left:515px;top:359.4px;width:586px;height:19.5px;background:#222;border:1px solid #555;"></div>
<div class="t" style="left:1066.5px;top:364.14px;color:#f3f3f3;">20</div>
<div class="a" style="left:1083.1px;top:359.5px;width:17.4px;height:19.1px;background:#5a5a5a;"></div>
<div class="a" style="left:1084.1px;top:361.2px;width:14.7px;height:6.6px;background:#e2e2e2;"></div>
<div class="a" style="left:1084.1px;top:369.9px;width:14.7px;height:7px;background:#e2e2e2;"></div>
<div class="a" style="left:1084.1px;top:367.8px;width:14.7px;height:2.1px;background:#9a9a9a;"></div>
<svg style="left:1087.3px;top:362.5px;" width="8.4" height="13" viewBox="0 0 8.4 13"><path d="M0.9 4.2 L4.2 1.2 L7.5 4.2 M0.9 8.6 L4.2 11.6 L7.5 8.6" fill="none" stroke="#111" stroke-width="2"/></svg>
<div class="t" style="left:359px;top:389.44px;color:#f3f3f3;letter-spacing:-0.086px;">Buy Symbols with the</div>
<div class="a" style="left:515px;top:387px;width:586px;height:20px;background:#2b2b2b;border:1px solid #555;"></div>
<svg style="left:1089px;top:394.2px;" width="6" height="4" viewBox="0 0 6 4"><path d="M0.6 0.6 L3 3.2 L5.4 0.6" fill="none" stroke="#e0e0e0" stroke-width="1.1"/></svg>
<div class="t" style="left:519.5px;top:391.04px;color:#f3f3f3;letter-spacing:-0.112px;">Lowest Weight Value</div>
<div class="t" style="left:359px;top:417.44px;color:#f3f3f3;letter-spacing:-0.337px;">Rebalance Frequency</div>
<div class="a" style="left:515px;top:415px;width:586px;height:20px;background:#2b2b2b;border:1px solid #555;"></div>
<svg style="left:1089px;top:422.2px;" width="6" height="4" viewBox="0 0 6 4"><path d="M0.6 0.6 L3 3.2 L5.4 0.6" fill="none" stroke="#e0e0e0" stroke-width="1.1"/></svg>
<div class="t" style="left:519.5px;top:419.04px;color:#f3f3f3;">Daily</div>
<div class="t" style="left:359px;top:445.44px;color:#f3f3f3;letter-spacing:-0.179px;">Position Type</div>
<svg style="left:515px;top:445px;" width="17" height="17" viewBox="0 0 17 17"><circle cx="8.2" cy="8.2" r="7.7" fill="#2a2a2a" stroke="#444" stroke-width="1"/><circle cx="8.2" cy="8.2" r="5" fill="#f0f0f0"/></svg>
<div class="t" style="left:534px;top:448.14px;color:#f3f3f3;">Long</div>
<svg style="left:568.5px;top:445px;" width="17" height="17" viewBox="0 0 17 17"><circle cx="8.2" cy="8.2" r="7.7" fill="#2a2a2a" stroke="#444" stroke-width="1"/></svg>
<div class="t" style="left:588px;top:448.14px;color:#f3f3f3;">Short</div>
<div class="a" style="left:1118px;top:207.2px;width:758px;height:764px;border:2px solid #7189a0;border-radius:4px;"></div>
<div class="a" style="left:1121.5px;top:250px;width:752px;height:719px;background:#252525;"></div>
<div class="a" style="left:1122px;top:203px;width:120px;height:8px;background:#1e2730;"></div>
<div class="t" style="left:1124.3px;top:198.54px;color:#f2f2f2;font-weight:700;letter-spacing:-0.388px;">Additional Conditions</div>
<div class="t" style="left:1125.7px;top:217.84px;color:#f3f3f3;letter-spacing:-0.000px;">Drop <u>Condition Building Blocks</u> here to add additional Conditions to the Rotation Strategy. Each Condition must resolve to true for a symbol</div>
<div class="t" style="left:1125.7px;top:232.44px;color:#f3f3f3;letter-spacing:-0.014px;">to be considered for inclusion.</div>
<div class="a" style="left:345px;top:980px;width:1541px;height:1.3px;background:#555;"></div>
<div class="a" style="left:345px;top:981.3px;width:1541px;height:20.5px;background:#262626;"></div>
<div class="t" style="left:349.4px;top:984.74px;color:#f06464;letter-spacing:-0.203px;">Need to Load Data</div>
<div class="a" style="left:539px;top:984px;width:1.3px;height:15.3px;background:#7d9cbc;"></div>
<div class="t" style="left:548.1px;top:984.74px;color:#f3f3f3;letter-spacing:-0.044px;">Profit: 0.00</div>
<div class="t" style="left:608.6px;top:984.74px;color:#8a8a8a;letter-spacing:-0.526px;">0.00%</div>
<div class="a" style="left:648.3px;top:984px;width:1.3px;height:15.3px;background:#7d9cbc;"></div>
<div class="t" style="left:657.2px;top:984.74px;color:#f3f3f3;letter-spacing:-0.071px;">Benchmark Profit: 0.00</div>
<div class="t" style="left:781px;top:984.74px;color:#8a8a8a;letter-spacing:-0.606px;">0.00%</div>
<div class="a" style="left:1892px;top:77px;width:27px;height:931px;background:#262626;"></div>
<div class="a" style="left:1893px;top:77px;width:26px;height:28px;background:#2e2e2e;"></div>
<div class="a" style="left:1893px;top:105.5px;width:26px;height:26.5px;background:#2e2e2e;"></div>
<div class="a" style="left:1893px;top:142.3px;width:26px;height:28.099999999999994px;background:#2e2e2e;"></div>
<div class="a" style="left:1893px;top:179px;width:26px;height:28px;background:#2e2e2e;"></div>
<div class="a" style="left:1893px;top:207.5px;width:26px;height:27.5px;background:#2e2e2e;"></div>
<div class="a" style="left:1893px;top:235.5px;width:26px;height:28.0px;background:#2e2e2e;"></div>
<div class="a" style="left:1893px;top:264px;width:26px;height:26px;background:#2e2e2e;"></div>
<div class="a" style="left:1893px;top:290.5px;width:26px;height:27.5px;background:#2e2e2e;"></div>
<div class="a" style="left:1893px;top:318.5px;width:26px;height:27.5px;background:#2e2e2e;"></div>
<div class="a" style="left:1893px;top:346.5px;width:26px;height:29.399999999999977px;background:#2e2e2e;"></div>
<div class="a" style="left:1893px;top:376.4px;width:26px;height:26.600000000000023px;background:#2e2e2e;"></div>
<div class="a" style="left:1893px;top:403.5px;width:26px;height:27.5px;background:#2e2e2e;"></div>
<div class="a" style="left:1893px;top:431.5px;width:26px;height:27.5px;background:#2e2e2e;"></div>
<div class="a" style="left:1893px;top:459.5px;width:26px;height:26.899999999999977px;background:#2e2e2e;"></div>
<div class="a" style="left:1893px;top:486.9px;width:26px;height:28.399999999999977px;background:#2e2e2e;"></div>
<div class="a" style="left:1893px;top:515.8px;width:26px;height:27.200000000000045px;background:#2e2e2e;"></div>
<div class="a" style="left:1893px;top:543.5px;width:26px;height:26.899999999999977px;background:#2e2e2e;"></div>
<div class="a" style="left:1893px;top:579.8px;width:26px;height:28.800000000000068px;background:#2e2e2e;"></div>
<div class="a" style="left:1893px;top:609.1px;width:26px;height:28.399999999999977px;background:#2e2e2e;"></div>
<div class="a" style="left:1893px;top:638px;width:26px;height:26.799999999999955px;background:#2e2e2e;"></div>
<div class="a" style="left:1893px;top:665.3px;width:26px;height:26.700000000000045px;background:#2e2e2e;"></div>
<div class="a" style="left:1893px;top:699.7px;width:26px;height:28.799999999999955px;background:#2e2e2e;"></div>
<div class="a" style="left:1893px;top:729px;width:26px;height:27.600000000000023px;background:#2e2e2e;"></div>
<div class="a" style="left:1893px;top:757.1px;width:26px;height:28.399999999999977px;background:#2e2e2e;"></div>
<div class="a" style="left:1893px;top:786px;width:26px;height:26.799999999999955px;background:#2e2e2e;"></div>
<div class="a" style="left:1893px;top:813.3px;width:26px;height:27.600000000000023px;background:#2e2e2e;"></div>
<svg style="left:1899.8px;top:80.7px;" width="13" height="21" viewBox="0 0 13 21"><path d="M0.5 0.5 L12.5 11.5 L7.5 12 L10.5 18.5 L7.5 20 L4.5 13.5 L0.5 17.5 Z" fill="#e4e0dc"/></svg>
<svg style="left:1896.7px;top:109.5px;" width="20" height="20" viewBox="0 0 20 20"><circle cx="9.8" cy="9.8" r="8.5" fill="none" stroke="#ee1122" stroke-width="2.4"/><path d="M3.8 3.8 L15.8 15.8" stroke="#ee1122" stroke-width="2.4"/></svg>
<svg style="left:1895.3px;top:145.1px;" width="22" height="22" viewBox="0 0 22 22"><rect x="0.5" y="0.5" width="21" height="21" fill="#4a5a7c" stroke="#3d4c98" stroke-width="1"/><rect x="1.8" y="1.8" width="2.6" height="2.6" fill="#aab4c0"/><rect x="5.1" y="1.8" width="2.6" height="2.6" fill="#aab4c0"/><rect x="8.4" y="1.8" width="2.6" height="2.6" fill="#aab4c0"/><rect x="15.0" y="1.8" width="2.6" height="2.6" fill="#aab4c0"/><rect x="18.3" y="1.8" width="2.6" height="2.6" fill="#aab4c0"/><rect x="1.8" y="5.1" width="2.6" height="2.6" fill="#aab4c0"/><rect x="5.1" y="5.1" width="2.6" height="2.6" fill="#aab4c0"/><rect x="11.7" y="5.1" width="2.6" height="2.6" fill="#aab4c0"/><rect x="18.3" y="5.1" width="2.6" height="2.6" fill="#aab4c0"/><rect x="1.8" y="8.4" width="2.6" height="2.6" fill="#aab4c0"/><rect x="5.1" y="8.4" width="2.6" height="2.6" fill="#aab4c0"/><rect x="11.7" y="8.4" width="2.6" height="2.6" fill="#aab4c0"/><rect x="18.3" y="8.4" width="2.6" height="2.6" fill="#aab4c0"/><rect x="1.8" y="11.7" width="2.6" height="2.6" fill="#aab4c0"/><rect x="8.4" y="11.7" width="2.6" height="2.6" fill="#aab4c0"/><rect x="11.7" y="11.7" width="2.6" height="2.6" fill="#aab4c0"/><rect x="15.0" y="11.7" width="2.6" height="2.6" fill="#aab4c0"/><rect x="5.1" y="15.0" width="2.6" height="2.6" fill="#aab4c0"/><rect x="8.4" y="15.0" width="2.6" height="2.6" fill="#aab4c0"/><rect x="11.7" y="15.0" width="2.6" height="2.6" fill="#aab4c0"/><rect x="15.0" y="15.0" width="2.6" height="2.6" fill="#aab4c0"/><rect x="18.3" y="15.0" width="2.6" height="2.6" fill="#aab4c0"/><rect x="1.8" y="18.3" width="2.6" height="2.6" fill="#aab4c0"/><rect x="5.1" y="18.3" width="2.6" height="2.6" fill="#aab4c0"/><rect x="8.4" y="18.3" width="2.6" height="2.6" fill="#aab4c0"/><rect x="11.7" y="18.3" width="2.6" height="2.6" fill="#aab4c0"/><rect x="15.0" y="18.3" width="2.6" height="2.6" fill="#aab4c0"/><rect x="18.3" y="18.3" width="2.6" height="2.6" fill="#aab4c0"/></svg>
<svg style="left:1897.2px;top:183.6px;" width="18.5" height="18.5" viewBox="0 0 18.5 18.5"><path d="M0 3.5 Q0 2.5 1 2.5 H3 V0.5 H6 V2.5 H12.5 V0.5 H15.5 V2.5 H17.5 Q18.5 2.5 18.5 3.5 V17.5 Q18.5 18.5 17.5 18.5 H1 Q0 18.5 0 17.5 Z" fill="#8c8c8c"/><rect x="3" y="8.5" width="12.5" height="2.8" fill="#2e2e2e"/></svg>
<svg style="left:1895px;top:211px;" width="22" height="20" viewBox="0 0 22 20"><path d="M0.5 15 Q2 18.5 5.5 17 Q7 14 8 10 Q10 3 14 2.5 Q17 3 17.5 7 Q18.5 11 20 12 L19 14 L21.5 16" fill="none" stroke="#a8a8a8" stroke-width="1.1"/><rect x="4.5" y="13" width="6" height="6" fill="none" stroke="#a8a8a8" stroke-width="1"/><rect x="14.5" y="0.5" width="6" height="6" fill="none" stroke="#a8a8a8" stroke-width="1"/></svg>
<svg style="left:1896px;top:238.6px;" width="20" height="20" viewBox="0 0 20 20"><path d="M10 2.5 L17.5 10 L10 17.5 L2.5 10 Z" fill="none" stroke="#a8a8a8" stroke-width="1.2"/><rect x="8" y="0.5" width="4" height="4" fill="#2e2e2e" stroke="#a8a8a8"/><rect x="8" y="15.5" width="4" height="4" fill="#2e2e2e" stroke="#a8a8a8"/><rect x="0.5" y="8" width="4" height="4" fill="#2e2e2e" stroke="#a8a8a8"/><rect x="15.5" y="8" width="4" height="4" fill="#2e2e2e" stroke="#a8a8a8"/></svg>
<svg style="left:1896px;top:269.8px;" width="20" height="16" viewBox="0 0 20 16"><ellipse cx="10" cy="7.5" rx="9.5" ry="7" fill="none" stroke="#a8a8a8" stroke-width="1.1"/><rect x="0.5" y="9.5" width="4" height="4" fill="#2e2e2e" stroke="#a8a8a8"/></svg>
<svg style="left:1897px;top:296.3px;" width="18" height="17" viewBox="0 0 18 17"><path d="M0 0.5 H18 M0 16.5 H18 M9 1.5 V16.5 M6.5 4 L9 1.5 L11.5 4" fill="none" stroke="#a8a8a8" stroke-width="1"/></svg>
<svg style="left:1895px;top:334px;" width="21" height="6" viewBox="0 0 21 6"><path d="M0 2.75 H21" stroke="#a8a8a8" stroke-width="1"/><rect x="14.5" y="0.5" width="4" height="4.5" fill="#2e2e2e" stroke="#a8a8a8"/></svg>
<svg style="left:1897px;top:353px;" width="16" height="16" viewBox="0 0 16 16"><path d="M2.5 13.5 L13.5 2.5" stroke="#a8a8a8" stroke-width="1"/><rect x="0.5" y="11.5" width="4" height="4" fill="#2e2e2e" stroke="#a8a8a8"/><rect x="11.5" y="0.5" width="4" height="4" fill="#2e2e2e" stroke="#a8a8a8"/></svg>
<svg style="left:1897.5px;top:381px;" width="17" height="16" viewBox="0 0 17 16"><path d="M1 13 L12 2 Q13 1 14.5 2.5 Q16 4 15 5 L4 16 H1 Z M10.5 3.5 L13.5 6.5" fill="none" stroke="#a8a8a8" stroke-width="1.1"/><path d="M12 15.5 H16" stroke="#a8a8a8" stroke-width="1"/></svg>
<svg style="left:1899px;top:410.7px;" width="15" height="11" viewBox="0 0 15 11"><path d="M0 3.5 H8.5 V0 L15 5.5 L8.5 11 V7.5 H0 Z" fill="#a0a0a0"/></svg>
<svg style="left:1897px;top:438px;" width="16" height="16" viewBox="0 0 16 16"><rect x="2.5" y="0.5" width="13" height="12.5" fill="#252525" stroke="#a8a8a8"/><rect x="0.5" y="11" width="4" height="4" fill="#2e2e2e" stroke="#a8a8a8"/></svg>
<svg style="left:1897px;top:464.6px;" width="16" height="17.5" viewBox="0 0 16 17.5"><rect x="2.5" y="0.5" width="13" height="15" fill="none" stroke="#a8a8a8"/><path d="M5 3.5 H13 M5 6.5 H13 M5 9.5 H13 M5 12.5 H13" stroke="#a8a8a8" stroke-width="1"/><rect x="0.5" y="12.5" width="4" height="4" fill="#2e2e2e" stroke="#a8a8a8"/></svg>
<svg style="left:1896px;top:491px;" width="20" height="19" viewBox="0 0 20 19"><path d="M10 2.5 L17.5 16 H2.5 Z" fill="#252525" stroke="#a8a8a8" stroke-width="1.1"/><rect x="8" y="0.5" width="4" height="4" fill="#2e2e2e" stroke="#a8a8a8"/><rect x="0.5" y="14.5" width="4" height="4" fill="#2e2e2e" stroke="#a8a8a8"/><rect x="15.5" y="14.5" width="4" height="4" fill="#2e2e2e" stroke="#a8a8a8"/></svg>
<svg style="left:1902px;top:517.6px;" width="8" height="22" viewBox="0 0 8 22"><path d="M4 0 V22" stroke="#a8a8a8" stroke-width="1"/><rect x="1.5" y="12" width="4.5" height="4" fill="#2e2e2e" stroke="#a8a8a8"/></svg>
<svg style="left:1896px;top:547.8px;" width="21" height="17.5" viewBox="0 0 21 17.5"><rect x="15" y="0.5" width="6" height="3" fill="#5f8c88"/><rect x="14" y="0.5" width="1.5" height="3" fill="#b8a870"/><rect x="7" y="4" width="5" height="3" fill="#b8a870"/><rect x="12" y="4" width="9" height="3" fill="#5f8c88"/><rect x="0.5" y="7.5" width="5" height="3" fill="#b8a870"/><rect x="5.5" y="7.5" width="15.5" height="3" fill="#5f8c88"/><rect x="4" y="11" width="8" height="3" fill="#b8a870"/><rect x="12" y="11" width="9" height="3" fill="#5f8c88"/><rect x="8" y="14.5" width="5" height="3" fill="#b8a870"/><rect x="13" y="14.5" width="8" height="3" fill="#5f8c88"/></svg>
<svg style="left:1896px;top:583px;" width="21" height="21" viewBox="0 0 21 21"><path d="M2 10.4 L19.7 0.2 M5 20.7 L19.7 13.2 M2 10.4 L7.4 20.7" stroke="#6e6e6e" stroke-width="0.9"/><path d="M0 18.6 L19.7 5.6" stroke="#9a9a9a" stroke-width="1.1"/></svg>
<svg style="left:1895px;top:611px;" width="21" height="23" viewBox="0 0 21 23"><path d="M1 13 L20 2 M1 17 L20 7 M3 22 L20 12" stroke="#6a6a6a" stroke-width="1"/><path d="M2.5 15.5 L18 7.5" stroke="#c0c0c0" stroke-width="1.2"/><rect x="0.5" y="13" width="4" height="4" fill="#2e2e2e" stroke="#c0c0c0"/><rect x="16" y="5" width="4" height="4" fill="#2e2e2e" stroke="#c0c0c0"/></svg>
<div class="a" style="left:1895px;top:639px;width:22px;height:22px;background:#141414;"></div>
<svg style="left:1895px;top:639px;" width="22" height="22" viewBox="0 0 22 22"><path d="M2 15 L8 4 M8 14 L14 4 L19 13 M2 18 L20 12" stroke="#8a8a8a" stroke-width="1"/><rect x="2.5" y="6" width="4" height="4" fill="#141414" stroke="#c8c8c8"/><rect x="2.5" y="15.5" width="4" height="4" fill="#141414" stroke="#c8c8c8"/><rect x="10.5" y="3.5" width="4" height="4" fill="#141414" stroke="#c8c8c8"/><rect x="11" y="12.5" width="4" height="4" fill="#141414" stroke="#c8c8c8"/></svg>
<svg style="left:1895px;top:668px;" width="21" height="21" viewBox="0 0 21 21"><path d="M3 6 L20 0.5 M4 20 L20 11" stroke="#6a6a6a" stroke-width="1"/><path d="M2.5 13.5 L18 5.5" stroke="#c0c0c0" stroke-width="1.2"/><rect x="0.5" y="11" width="4" height="4" fill="#2e2e2e" stroke="#c0c0c0"/><rect x="16" y="3" width="4" height="4" fill="#2e2e2e" stroke="#c0c0c0"/></svg>
<svg style="left:1895.5px;top:703.6px;" width="21" height="22" viewBox="0 0 21 22"><path d="M2.5 2.5 L10 19.5" stroke="#a8a8a8" stroke-width="1.1"/><path d="M8 6 Q13 -0.5 19 6" fill="none" stroke="#777" stroke-width="0.8"/><path d="M7 7 H21 M9 10.5 H21 M11 14 H21" stroke="#777" stroke-width="0.8" stroke-dasharray="1.5 0.8"/><rect x="0.5" y="0.5" width="4" height="4" fill="#2e2e2e" stroke="#a8a8a8"/><rect x="8" y="17.5" width="4" height="4" fill="#2e2e2e" stroke="#a8a8a8"/></svg>
<svg style="left:1895.5px;top:731.7px;" width="21" height="23" viewBox="0 0 21 23"><path d="M2.5 2.5 L7 20 L12 9" fill="none" stroke="#a8a8a8" stroke-width="1.1"/><path d="M13 1.5 H21 M13 5 H21 M13 9 H21 M13 13 H21 M13 17.5 H21" stroke="#888" stroke-width="1"/><rect x="0.5" y="0.5" width="4" height="4" fill="#2e2e2e" stroke="#a8a8a8"/><rect x="5" y="18" width="4" height="4" fill="#2e2e2e" stroke="#a8a8a8"/><rect x="10" y="7" width="4" height="4" fill="#2e2e2e" stroke="#a8a8a8"/></svg>
<svg style="left:1895.5px;top:760.5px;" width="21" height="21.5" viewBox="0 0 21 21.5"><path d="M2.5 2.5 L21 12 M2.5 2.5 L19 19 M2.5 2.5 L10 19" stroke="#777" stroke-width="0.9"/><path d="M2.5 2.5 L9 18" stroke="#a8a8a8" stroke-width="1.1"/><rect x="0.5" y="0.5" width="4" height="4" fill="#2e2e2e" stroke="#a8a8a8"/><rect x="7" y="17" width="4" height="4" fill="#2e2e2e" stroke="#a8a8a8"/></svg>
<svg style="left:1895.5px;top:788.6px;" width="21" height="21.5" viewBox="0 0 21 21.5"><path d="M2.5 2.5 L9 18.5" stroke="#a8a8a8" stroke-width="1.1"/><path d="M6 8.5 H21 M7.5 11.5 H21 M9 14.5 H21" stroke="#8a8a8a" stroke-width="1"/><rect x="0.5" y="0.5" width="4" height="4" fill="#2e2e2e" stroke="#a8a8a8"/><rect x="7" y="17" width="4" height="4" fill="#2e2e2e" stroke="#a8a8a8"/></svg>
<svg style="left:1897px;top:816px;" width="16" height="22" viewBox="0 0 16 22"><path d="M2 0 V22 M6 0 V22 M10 0 V22 M14 0 V22" stroke="#777" stroke-width="1"/><rect x="0" y="15" width="4.5" height="3.5" fill="#2e2e2e" stroke="#a8a8a8"/></svg>
<div class="a" style="left:0px;top:1008px;width:1919px;height:19px;background:#232323;"></div>
<div class="t" style="left:4.7px;top:1014.14px;color:#f0f0f0;letter-spacing:-0.193px;">pfelix: Premium License renews in 335 days</div>
<div class="a" style="left:237.5px;top:1012px;width:1.3px;height:15px;background:#8fb0d8;"></div>
<div class="t" style="left:243.9px;top:1014.14px;color:#f05a5a;letter-spacing:0.419px;">Non-Admin</div>
<div class="a" style="left:314.2px;top:1012px;width:1.3px;height:15px;background:#8fb0d8;"></div>
<svg style="left:320.8px;top:1015px;" width="11.3" height="11.3" viewBox="0 0 11.3 11.3"><circle cx="5.65" cy="5.65" r="5.65" fill="#f4f4f4"/><circle cx="5.65" cy="5.65" r="4.1" fill="#ee0000"/></svg>
<div class="t" style="left:335.8px;top:1014.14px;color:#f0f0f0;letter-spacing:-0.232px;">Failure running backtest.: Strategy: Rising EPS trend</div>
<div class="a" style="left:1657px;top:1012.4px;width:1.3px;height:15px;background:#8fb0d8;"></div>
<div class="a" style="left:1664.4px;top:1011.3px;width:89.3px;height:17px;background:#2b2b2b;border:1px solid #4a4a4a;"></div>
<div class="t" style="left:1668.4px;top:1014.14px;color:#f0f0f0;letter-spacing:-0.557px;">US Stocks</div>
<svg style="left:1742px;top:1017.5px;" width="6" height="4" viewBox="0 0 6 4"><path d="M0.6 0.6 L3 3.2 L5.4 0.6" fill="none" stroke="#e0e0e0" stroke-width="1.1"/></svg>
<div class="t" style="left:1758.5px;top:1014.14px;color:#f0f0f0;letter-spacing:-0.799px;">EST: 08:44:33</div>
<div class="t" style="left:1832.6px;top:1014.14px;color:#f0f0f0;letter-spacing:-0.472px;">Local: 07:44:33</div></body></html>
